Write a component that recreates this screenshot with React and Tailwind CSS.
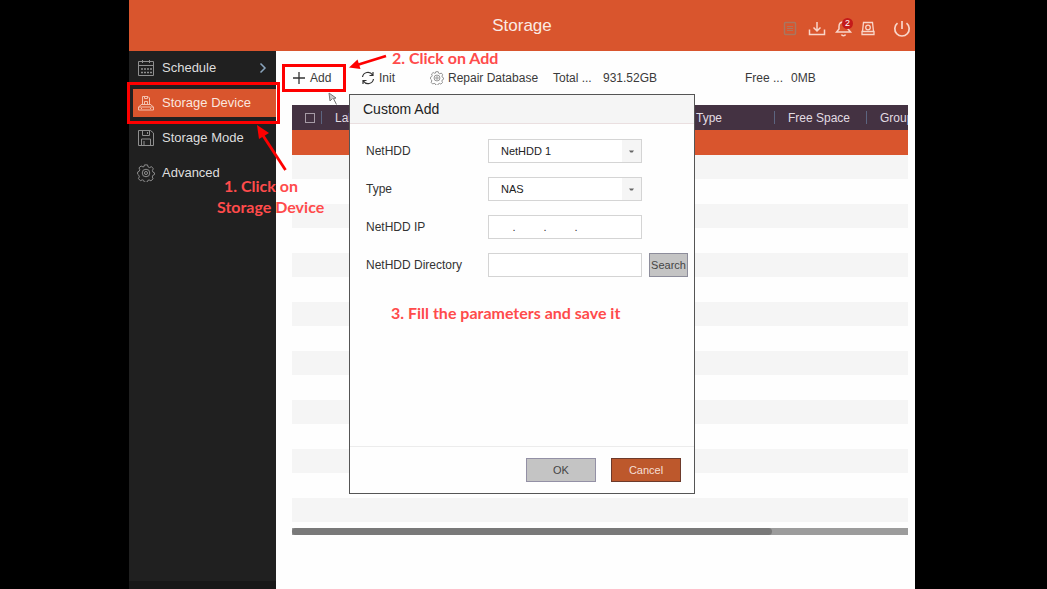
import React from "react";

function CalendarIcon() {
  return (
    <svg width="18" height="18" viewBox="0 0 18 18" fill="none" stroke="#8f8f8f" aria-hidden="true">
      <path d="M1.5 2.5h15v14h-15zM1.5 6.5h15M5.5 1v3M12.5 1v3" />
      <path d="M4 10h11M4 13.500h11" strokeDasharray="2 1" strokeWidth="1.5" />
    </svg>
  );
}

function DeviceIcon() {
  return (
    <svg width="18" height="18" viewBox="0 0 18 18" fill="none" stroke="#f3c0ae" aria-hidden="true">
      <path d="M5.500 10V2.500h5.500l1.500 1.500V10M7.500 2.500v2h3v-2M7.500 10V7.500h3V10M4 10.500h10" />
      <path d="M4.500 10.500l-3 2.500M13.500 10.500l3 2.500M1.500 13h15v3h-15zM4 14.500h1M13 14.500h1" />
    </svg>
  );
}

function FloppyIcon() {
  return (
    <svg width="18" height="18" viewBox="0 0 18 18" fill="none" stroke="#8f8f8f" aria-hidden="true">
      <path d="M1.500 1.500h12l3 2.500v12.500h-15zM5.500 1.500v5h7v-5M10.500 3v2M4.500 16.500v-6.500h9v6.500M7 12v4.500" />
    </svg>
  );
}

function GearIcon({ size, color }) {
  return (
    <svg width={size} height={size} viewBox="0 0 20 20" fill="none" stroke={color} strokeWidth="1.100" aria-hidden="true">
      <path d="M8.300 1h3.400l.600 2.200 1.700.800 2.100-1.100 2 2.400-1 2 .600 1.700 1.800.900v1.800l-2 1-.500 1.700.900 2.100-2.400 2.200-2-1-1.600.700-.800 1.900H8.300l-.800-2-1.600-.700-2.100 1-2.200-2.400 1-2-.600-1.700L.700 11.300V8.900l1.700-.800.700-1.700-.900-2.100 2.300-2.100 2.100 1L7.700 3z" />
      <circle cx="10" cy="10" r="4.200" />
      <circle cx="10" cy="10" r="1.700" />
    </svg>
  );
}

const navItems = [
  { label: "Schedule", icon: <CalendarIcon />, expandable: true },
  { label: "Storage Device", icon: <DeviceIcon />, active: true },
  { label: "Storage Mode", icon: <FloppyIcon /> },
  { label: "Advanced", icon: <GearIcon size={18} color="#8f8f8f" /> },
];

function Header() {
  return (
    <header className="relative flex h-[51px] shrink-0 items-center justify-center bg-[#d9552d] text-white">
      <h1 className="text-[17px] leading-6 text-[#fbeae4]">Storage</h1>
      <div className="absolute top-[18px] right-[3px] flex items-center text-[#f9d6ca]">
        <button aria-label="Log" className="mr-[9px]">
          <svg width="16" height="20" viewBox="0 0 16 20" fill="none" stroke="#a9765f">
            <rect x="2.500" y="4.500" width="11" height="12" rx="1" strokeWidth="1.500" />
            <path d="M5 8.500h6M5 10.500h6M5 12.500h6" />
          </svg>
        </button>
        <button aria-label="Download" className="mr-2">
          <svg width="20" height="20" viewBox="0 0 20 20" fill="none" stroke="currentColor" strokeWidth="1.500">
            <path d="M2.500 11.500v5h15v-5M10 4v8.500M6.500 9.500l3.500 3.500 3.500-3.500" />
          </svg>
        </button>
        <button aria-label="Alarms" className="relative mr-[6px]">
          <svg width="18" height="20" viewBox="0 0 18 20" fill="none" stroke="currentColor" strokeWidth="1.500">
            <path d="M1.500 14h14l-2.500-3V8.500c0-3-2-4.500-4.500-4.500S4 5.500 4 8.500V11zM6.500 16.500c.500 1.500 3.500 1.500 4 0" />
          </svg>
          <span className="absolute top-0 right-0 flex h-[11px] w-[11px] items-center justify-center rounded-full bg-[#c41a1a] text-[9px] leading-none text-white">
            2
          </span>
        </button>
        <button aria-label="Disk status" className="mr-[15px]">
          <svg width="18" height="20" viewBox="0 0 18 20" fill="none" stroke="currentColor" strokeWidth="1.300">
            <path d="M4.500 4.500h9l1 9h-11zM3 13.500h12v3H3z" />
            <circle cx="9" cy="9.500" r="2.300" />
          </svg>
        </button>
        <button aria-label="Power">
          <svg width="20" height="20" viewBox="0 0 20 20" fill="none" stroke="currentColor" strokeWidth="1.700">
            <path d="M10 3v8M5.500 5.200a7.200 7.200 0 1 0 9 0" />
          </svg>
        </button>
      </div>
    </header>
  );
}

function Sidebar() {
  return (
    <aside className="flex w-[147px] shrink-0 flex-col justify-between bg-[#202020]">
      <nav className="flex flex-col gap-[7px] pt-[3px]">
        {navItems.map((item) => (
          <div key={item.label} className="relative pl-1">
            <button
              className={
                item.active
                  ? "flex h-7 w-full items-center bg-[#d9552d] pl-1 text-left text-[13px] text-[#fbe6df]"
                  : "flex h-7 w-full items-center pl-1 text-left text-[13px] text-[#dedede]"
              }
            >
              {item.icon}
              <span className="ml-[7px] grow">{item.label}</span>
              {item.expandable && (
                <svg className="mr-[9px]" width="8" height="12" viewBox="0 0 8 12" fill="none" stroke="#8aa5bd" strokeWidth="1.500" aria-hidden="true">
                  <path d="M1.500 1.500l4.500 4.500-4.500 4.500" />
                </svg>
              )}
            </button>
            {item.active && (
              <span className="pointer-events-none absolute -inset-y-[7px] -right-1 -left-[2px] z-10 border-[3px] border-[#fe0000]" />
            )}
          </div>
        ))}
      </nav>
      <div className="h-2 bg-[#181818]" />
    </aside>
  );
}

function Toolbar() {
  return (
    <div className="flex h-[54px] items-center pl-4 text-[12px] text-[#3a3a3a]">
      <button className="relative flex w-[69px] items-center gap-1 whitespace-nowrap">
        <svg width="14" height="14" viewBox="0 0 14 14" fill="none" stroke="#333" strokeWidth="1.300" aria-hidden="true">
          <path d="M7 1v12M1 7h12" />
        </svg>
        Add
        <span className="pointer-events-none absolute -inset-y-[5px] right-[15px] -left-[10px] border-[3px] border-[#fe0000]" />
      </button>
      <button className="flex w-[69px] items-center gap-1 whitespace-nowrap">
        <svg width="14" height="14" viewBox="0 0 14 14" fill="none" stroke="#333" strokeWidth="1.200" aria-hidden="true">
          <path d="M1.500 6a5.500 5.500 0 0 1 10-2.200M12 1v3.500H8.500M12.500 8a5.500 5.500 0 0 1-10 2.200M2 13V9.500h3.500" />
        </svg>
        Init
      </button>
      <button className="flex w-[123px] items-center gap-1 whitespace-nowrap">
        <GearIcon size={14} color="#777" />
        Repair Database
      </button>
      <span className="w-[50px]">Total ...</span>
      <span className="w-[142px]">931.52GB</span>
      <span className="w-[46px]">Free ...</span>
      <span>0MB</span>
    </div>
  );
}

const columns = [
  { label: "Label", width: "w-[361px]" },
  { label: "Type", width: "w-[92px]" },
  { label: "Free Space", width: "w-[92px]" },
  { label: "Group", width: "w-[215px]" },
];

function DiskTable() {
  return (
    <div className="mr-[7px] ml-4">
      <div className="overflow-hidden">
        <table className="w-[790px] table-fixed border-collapse">
          <thead>
            <tr className="h-[25px] bg-[#443242] text-[12px] text-[#e2dce2]">
              <th className="w-[30px] p-0">
                <div className="flex items-center justify-between pl-[13px]">
                  <input type="checkbox" aria-label="Select all" className="h-[10px] w-[10px] appearance-none border border-[#a69ba6]" />
                  <span className="h-[13px] w-px bg-[#5c6580]" />
                </div>
              </th>
              {columns.map((c) => (
                <th key={c.label} className={`${c.width} p-0 font-normal`}>
                  <div className="flex items-center justify-between pl-[13px]">
                    {c.label}
                    <span className="h-[13px] w-px bg-[#5c6580]" />
                  </div>
                </th>
              ))}
            </tr>
          </thead>
          <tbody>
            <tr className="h-[25px] bg-[#d9552d]">
              <td colSpan={5} className="p-0" />
            </tr>
            {Array.from({ length: 15 }, (_, i) => (
              <tr key={i} className={i % 2 === 0 ? "h-6 bg-[#f5f5f5]" : "h-[25px] bg-[#fefefe]"}>
                <td colSpan={5} className="p-0" />
              </tr>
            ))}
          </tbody>
        </table>
      </div>
      <div className="mt-[6px] h-[7px] bg-[#9c9c9c]">
        <div className="h-full w-[78%] rounded-full bg-[#797979]" />
      </div>
    </div>
  );
}

function SelectField({ id, label, value }) {
  return (
    <div className="flex items-center">
      <label htmlFor={id} className="w-[122px]">{label}</label>
      <div className="relative w-[154px]">
        <select id={id} className="h-6 w-full appearance-none border border-[#d4d4d4] bg-white pl-3 text-[11px] text-[#222]">
          <option>{value}</option>
        </select>
        <span className="pointer-events-none absolute inset-y-px right-px flex w-[19px] items-center justify-center bg-[#f5f5f5]">
          <svg width="5" height="3" viewBox="0 0 5 3" fill="#666" aria-hidden="true">
            <path d="M0 .500h5L3.500 2.500h-2z" />
          </svg>
        </span>
      </div>
    </div>
  );
}

function AddDialog() {
  return (
    <section
      role="dialog"
      aria-labelledby="dialog-title"
      className="absolute top-[43px] left-[73px] flex h-[400px] w-[346px] flex-col border border-[#555] bg-[#fefefe]"
    >
      <h2 id="dialog-title" className="flex h-[29px] items-center border-b border-[#eadfe0] bg-[#f5f5f5] pl-[13px] text-[14px] text-[#222]">
        Custom Add
      </h2>
      <div className="flex grow flex-col gap-[14px] pt-[15px] pl-4 text-[12px] text-[#333]">
        <SelectField id="nethdd" label="NetHDD" value="NetHDD 1" />
        <SelectField id="type" label="Type" value="NAS" />
        <div className="flex items-center">
          <label htmlFor="ip-1" className="w-[122px]">NetHDD IP</label>
          <div className="flex h-6 w-[154px] items-center border border-[#d4d4d4] bg-white text-[11px]">
            <input id="ip-1" aria-label="NetHDD IP octet 1" className="w-[22px] text-center outline-none" />
            <span className="w-[6px] text-center">.</span>
            <input aria-label="NetHDD IP octet 2" className="w-[25px] text-center outline-none" />
            <span className="w-[6px] text-center">.</span>
            <input aria-label="NetHDD IP octet 3" className="w-[25px] text-center outline-none" />
            <span className="w-[6px] text-center">.</span>
            <input aria-label="NetHDD IP octet 4" className="w-[25px] text-center outline-none" />
          </div>
        </div>
        <div className="flex items-center">
          <label htmlFor="directory" className="w-[122px]">NetHDD Directory</label>
          <input id="directory" className="h-6 w-[154px] border border-[#d4d4d4] bg-white px-2 text-[11px] outline-none" />
          <button className="ml-[7px] flex h-6 w-[39px] items-center justify-center border border-[#8d8d9b] bg-[#c4c4c4] text-[11px] text-[#444]">
            Search
          </button>
        </div>
      </div>
      <div className="flex h-[47px] items-center justify-end gap-[15px] border-t border-[#ececec] pr-[13px] text-[11px]">
        <button className="h-6 w-[70px] border border-[#9390a5] bg-[#c4c4c4] text-[#444]">OK</button>
        <button className="h-6 w-[70px] border border-[#6d3a2b] bg-[#bd582c] text-[#f6dfd4]">Cancel</button>
      </div>
      <p className="absolute top-[207px] left-[41px] font-['Lato',sans-serif] text-[16px] leading-[21px] font-bold whitespace-nowrap text-[#ff4b4b]">
        3. Fill the parameters and save it
      </p>
    </section>
  );
}

function Annotations() {
  return (
    <div className="pointer-events-none absolute inset-0 font-['Lato',sans-serif] text-[16px] leading-[21px] font-bold text-[#ff4b4b]">
      <p className="absolute top-[175px] left-[88px] w-[110px] whitespace-nowrap">
        <span className="ml-[7px]">1. Click on</span>
        <br />
        Storage Device
      </p>
      <p className="absolute top-[47px] left-[263px] whitespace-nowrap">2. Click on Add</p>
      <svg className="absolute top-[124px] left-[126px]" width="34" height="48" viewBox="0 0 34 48" aria-hidden="true">
        <path d="M30.500 46L7 10" stroke="#fe0000" strokeWidth="2.800" />
        <path d="M2 1l2 14 10-6z" fill="#fe0000" />
      </svg>
      <svg className="absolute top-[52px] left-[220px]" width="40" height="20" viewBox="0 0 40 20" aria-hidden="true">
        <path d="M37 4L8 13" stroke="#fe0000" strokeWidth="2.800" />
        <path d="M0 15.500L8.500 7.500l3 9.500z" fill="#fe0000" />
      </svg>
      <svg className="absolute top-[92px] left-[199px]" width="12" height="14" viewBox="0 0 12 14" aria-hidden="true">
        <path d="M1 1l7 5-2.500 .500 3 6M1 1l1 8 2.500-2.500" fill="#c9c9c9" stroke="#777" strokeWidth="1" />
      </svg>
    </div>
  );
}

export default function App() {
  return (
    <div className="min-h-screen bg-black pr-[132px] pl-[129px] font-['Liberation_Sans',Arial,sans-serif]">
      <div className="relative flex min-h-screen flex-col">
        <Header />
        <div className="flex grow">
          <Sidebar />
          <main className="relative min-w-0 grow bg-[#fefefe]">
            <Toolbar />
            <DiskTable />
            <AddDialog />
          </main>
        </div>
        <Annotations />
      </div>
    </div>
  );
}
